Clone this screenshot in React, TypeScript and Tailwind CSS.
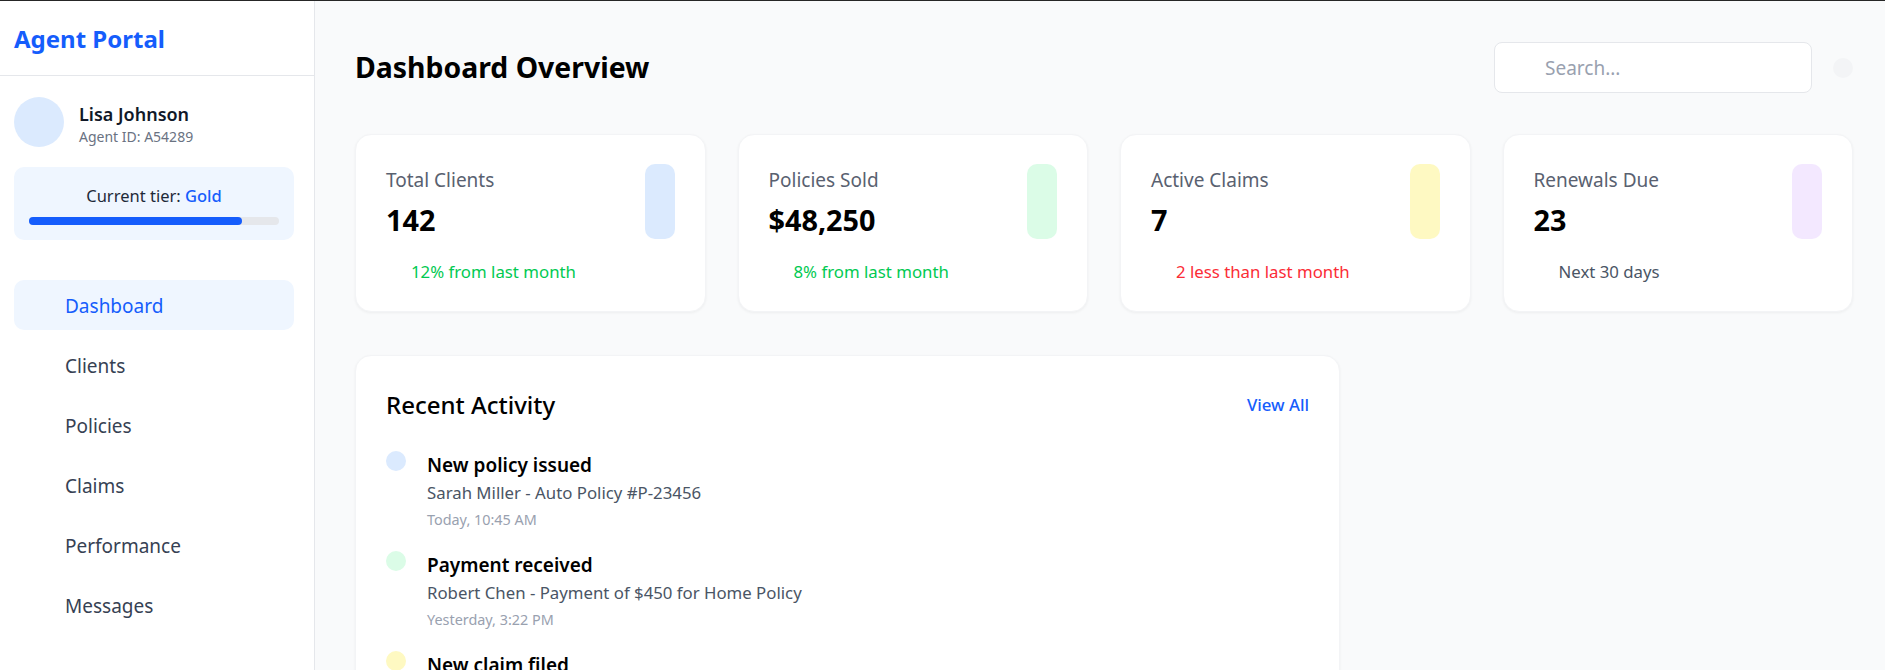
const stats = [
  { label: "Total Clients", value: "142", note: "12% from last month", bar: "bg-blue-100", noteColor: "text-green-500" },
  { label: "Policies Sold", value: "$48,250", note: "8% from last month", bar: "bg-green-100", noteColor: "text-green-500" },
  { label: "Active Claims", value: "7", note: "2 less than last month", bar: "bg-yellow-100", noteColor: "text-red-500" },
  { label: "Renewals Due", value: "23", note: "Next 30 days", bar: "bg-purple-100", noteColor: "text-gray-600" },
]

const activity = [
  { title: "New policy issued", text: "Sarah Miller - Auto Policy #P-23456", time: "Today, 10:45 AM", dot: "bg-blue-100" },
  { title: "Payment received", text: "Robert Chen - Payment of $450 for Home Policy", time: "Yesterday, 3:22 PM", dot: "bg-green-100" },
  { title: "New claim filed", text: "Emily Davis - Auto Claim #C-7812", time: "Yesterday, 11:05 AM", dot: "bg-yellow-100" },
]

const nav = ["Dashboard", "Clients", "Policies", "Claims", "Performance", "Messages"]

const App = () => {
  return (
    <div className="flex min-h-screen border-t border-[#262626] bg-gray-50 font-[family-name:'Noto_Sans','Liberation_Sans',sans-serif] text-gray-900">
      {/* sidebar */}
      <aside className="w-[315px] shrink-0 bg-white border-r border-gray-200">
        <div className="h-[75px] px-[14px] flex items-center border-b border-gray-200">
          <h1 className="mt-[2px] text-[24px] font-bold text-blue-600">Agent Portal</h1>
        </div>

        <div className="pl-[14px] pr-[20px] pt-[20px]">
          <div className="flex items-center gap-[15px]">
            <div className="w-[50px] h-[50px] rounded-full bg-blue-100"></div>
            <div className="flex flex-col mt-[5px]">
              <span className="text-[18px] leading-[26px] font-semibold text-gray-900">Lisa Johnson</span>
              <span className="text-[14px] leading-[20px] text-gray-500">Agent ID: A54289</span>
            </div>
          </div>

          <div className="mt-[20px] bg-blue-50 rounded-[10px] px-[15px] pt-[17px] pb-[15px]">
            <p className="text-center text-[16.5px] leading-[24px] text-gray-800">
              Current tier: <span className="font-medium text-blue-600">Gold</span>
            </p>
            <div className="mt-[9px] h-[8px] rounded-full bg-gray-200">
              <div className="h-full w-[85%] rounded-full bg-blue-600"></div>
            </div>
          </div>

          <nav className="mt-[40px] flex flex-col gap-[10px]">
            {nav.map((item, i) => (
              <a
                key={item}
                href="#"
                className={
                  i === 0
                    ? "h-[50px] flex items-center pt-[2px] pl-[51px] rounded-[10px] bg-blue-50 text-blue-600 text-[19px]"
                    : "h-[50px] flex items-center pt-[2px] pl-[51px] rounded-[10px] text-gray-700 text-[19px]"
                }
              >
                {item}
              </a>
            ))}
          </nav>
        </div>
      </aside>

      {/* main */}
      <main className="flex-1 pt-[41px] pl-[40px] pr-[32px]">
        <div className="flex items-center justify-between">
          <h2 className="text-[28.4px] font-bold text-black">Dashboard Overview</h2>
          <div className="flex items-center gap-[21px]">
            <input
              className="w-[318px] h-[51px] rounded-[8px] border border-gray-200 bg-white pl-[50px] text-[19px] placeholder:text-gray-400 outline-none"
              placeholder="Search..."
            />
            <div className="w-5 h-5 rounded-full bg-gray-100"></div>
          </div>
        </div>

        <div className="mt-[41px] grid grid-cols-4 gap-8">
          {stats.map((s) => (
            <div key={s.label} className="bg-white rounded-[16px] border border-gray-100 shadow-[0_1px_3px_rgba(0,0,0,0.05)] pt-[29px] px-[30px] pb-[27px]">
              <div className="flex justify-between items-start">
                <div>
                  <p className="mt-[2px] text-[19px] leading-[28px] text-[#596170]">{s.label}</p>
                  <p className="mt-[6px] text-[28.8px] leading-[40px] font-bold text-black">{s.value}</p>
                </div>
                <div className={`w-[30px] h-[75px] rounded-[10px] ${s.bar}`}></div>
              </div>
              <p className={`mt-[20px] pl-[25px] text-[16.8px] leading-[24px] ${s.noteColor}`}>{s.note}</p>
            </div>
          ))}
        </div>

        <div className="mt-[43px] w-[985px] bg-white rounded-[16px] border border-gray-100 shadow-[0_1px_3px_rgba(0,0,0,0.05)] p-[30px]">
          <div className="flex items-center justify-between h-[38px]">
            <h3 className="text-[24px] font-medium text-black">Recent Activity</h3>
            <a href="#" className="text-[16.8px] font-medium text-blue-600">View All</a>
          </div>
          <ul className="mt-[27px] flex flex-col gap-[20px]">
            {activity.map((a) => (
              <li key={a.title} className="flex items-start gap-[21px]">
                <div className={`w-5 h-5 rounded-full shrink-0 ${a.dot}`}></div>
                <div>
                  <p className="text-[19px] leading-[28px] font-semibold text-black">{a.title}</p>
                  <p className="text-[16.8px] leading-[28px] text-gray-600">{a.text}</p>
                  <p className="mt-[2px] text-[14.4px] leading-[22px] text-gray-400">{a.time}</p>
                </div>
              </li>
            ))}
          </ul>
        </div>
      </main>
    </div>
  )
}

export default App
